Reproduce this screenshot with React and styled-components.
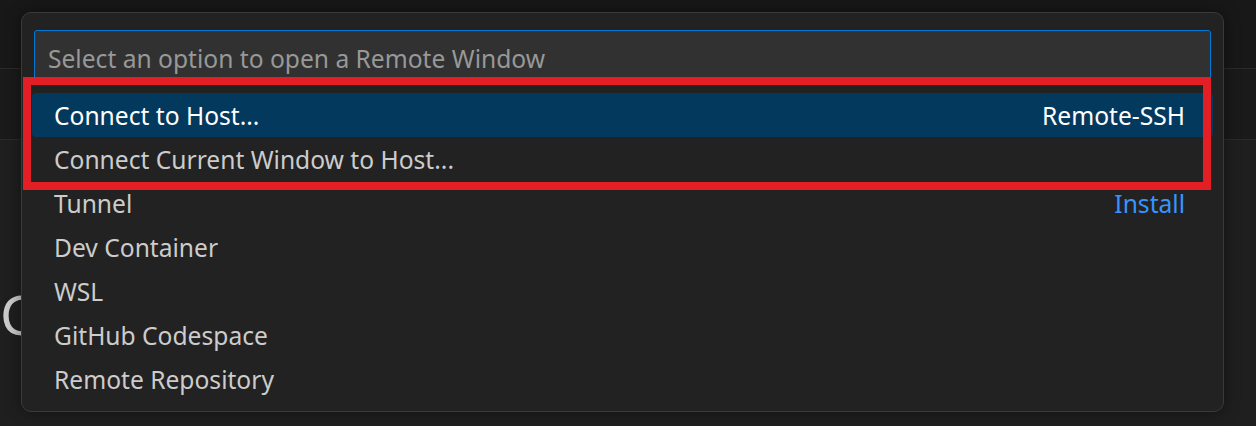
import React from 'react'
import styled, { createGlobalStyle } from 'styled-components'

const GlobalStyle = createGlobalStyle`
  html, body {
    margin: 0;
    padding: 0;
    background: #1f1f1f;
  }
  * {
    box-sizing: border-box;
  }
`

const Page = styled.div`
  position: relative;
  width: 1256px;
  height: 426px;
  overflow: hidden;
  display: flex;
  flex-direction: column;
  font-family: "Noto Sans", "Open Sans", sans-serif;
  background: #1f1f1f;
`

const TitleBar = styled.div`
  height: 69px;
  background: #181818;
  border-bottom: 1px solid #2b2b2b;
`

const TabBar = styled.div`
  height: 71px;
  background: #1a1a1a;
  border-bottom: 1px solid #2b2b2b;
`

const Editor = styled.div`
  flex: 1;
  padding: 146px 0 0 0;
`

// only the first letter of the heading peeks out from under the quick pick
const Heading = styled.h1`
  margin: 0;
  font-size: 55px;
  font-weight: 400;
  line-height: 1;
  color: #cccccc;
`

const QuickPick = styled.div`
  position: absolute;
  left: 21px;
  top: 12px;
  width: 1203px;
  height: 400px;
  padding: 17px 12px 0 12px;
  background: #222222;
  border: 1px solid #3a3a3a;
  border-radius: 10px;
  box-shadow: 0 0 16px rgba(0, 0, 0, 0.45);
`

const Input = styled.div`
  height: 54px;
  display: flex;
  align-items: center;
  padding: 3px 13px 0 13px;
  background: #313131;
  border: 1px solid #0078d4;
  border-radius: 3px;
  font-size: 24.6px;
  color: #989898;
`

const List = styled.div`
  margin: 9px -2px 0 -2px;
  display: flex;
  flex-direction: column;
`

const Row = styled.div`
  height: 44px;
  display: flex;
  align-items: center;
  justify-content: space-between;
  padding: 0 28px 0 22px;
  border-radius: 4px;
  font-size: 24.6px;
  color: ${p => (p.$active ? '#ffffff' : '#cccccc')};
  background: ${p => (p.$active ? '#04395e' : 'transparent')};
`

const Detail = styled.span`
  color: ${p => (p.$link ? '#3794ff' : 'inherit')};
`

const Callout = styled.div`
  position: absolute;
  left: 1px;
  top: 64px;
  width: 1188px;
  height: 113px;
  border: 8px solid #e31e24;
  pointer-events: none;
`

const items = [
  { label: 'Connect to Host...', detail: 'Remote-SSH', active: true },
  { label: 'Connect Current Window to Host...' },
  { label: 'Tunnel', detail: 'Install', link: true },
  { label: 'Dev Container' },
  { label: 'WSL' },
  { label: 'GitHub Codespace' },
  { label: 'Remote Repository' }
]

export default function App () {
  return (
    <>
      <GlobalStyle />
      <Page>
        <TitleBar />
        <TabBar />
        <Editor>
          <Heading>C</Heading>
        </Editor>
        <QuickPick>
          <Input>Select an option to open a Remote Window</Input>
          <List>
            {items.map(item => (
              <Row key={item.label} $active={item.active}>
                <span>{item.label}</span>
                {item.detail && <Detail $link={item.link}>{item.detail}</Detail>}
              </Row>
            ))}
          </List>
          <Callout />
        </QuickPick>
      </Page>
    </>
  )
}
